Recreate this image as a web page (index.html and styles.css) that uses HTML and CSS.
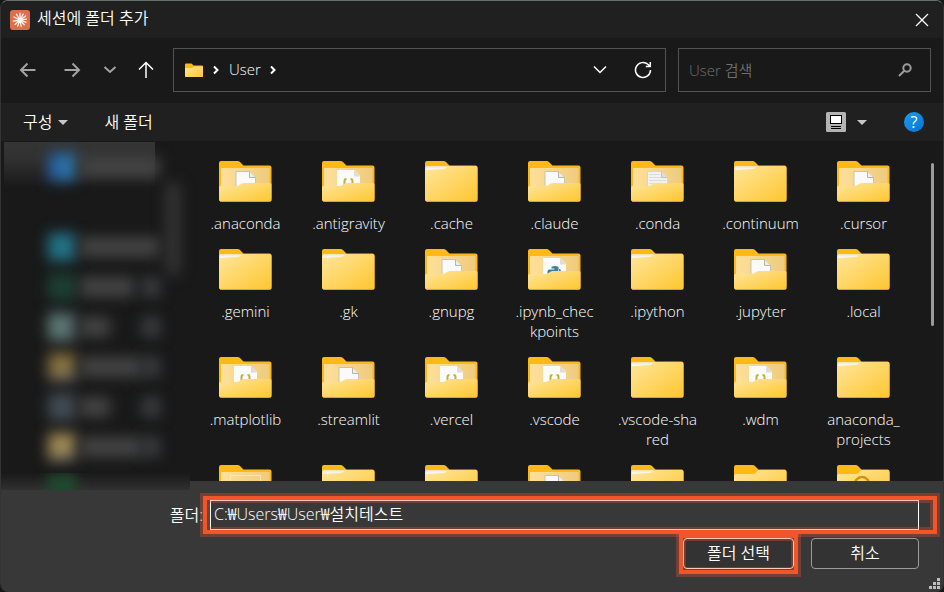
FILE: index.html
```html
<!DOCTYPE html>
<html lang="ko">
<head>
<meta charset="utf-8">
<title>세션에 폴더 추가</title>
<link rel="stylesheet" href="styles.css">
</head>
<body>
<svg class="defs" aria-hidden="true">
  <defs>
    <linearGradient id="front" x1="0" y1="0" x2="1" y2="1">
      <stop offset="0" stop-color="#ffe69c"/><stop offset="1" stop-color="#fec62f"/>
    </linearGradient>
    <linearGradient id="inside" x1="0" y1="0" x2="1" y2="0">
      <stop offset="0" stop-color="#fee09a"/><stop offset="1" stop-color="#eecb7d"/>
    </linearGradient>
    <linearGradient id="sheet" x1="0" y1="0" x2="0" y2="1">
      <stop offset="0" stop-color="#e6e6e6"/><stop offset="1" stop-color="#fffdf4"/>
    </linearGradient>
    <symbol id="folder-back" viewBox="0 0 53 42">
      <path d="M0 3a2 2 0 0 1 2-2h16.500q1.500 0 2.500 1l3.500 3.500h26a2 2 0 0 1 2 2V39a2 2 0 0 1-2 2H2a2 2 0 0 1-2-2z" fill="#fdb915"/>
    </symbol>
    <symbol id="folder" viewBox="0 0 53 42">
      <use href="#folder-back" width="53" height="42"/>
      <path d="M0 8q0-2 2-2h48.500a2 2 0 0 1 2 2V39.500a2 2 0 0 1-2 2H2a2 2 0 0 1-2-2z" fill="url(#front)"/>
      <path d="M1 7.500a1 1 0 0 1 1-1h20.500q-1.500 2.500-4 2.500L1 10z" fill="url(#sheet)"/>
      <path d="M.5 40.500q.5 1 1.500 1h48.500q1.500 0 2-1" fill="none" stroke="#dba52a"/>
    </symbol>
    <symbol id="open-back" viewBox="0 0 53 42">
      <use href="#folder-back" width="53" height="42"/>
      <path d="M2 8h48.500v20H2z" fill="url(#inside)"/>
    </symbol>
    <symbol id="open-front" viewBox="0 0 53 42">
      <path d="M0 27.500q0-1.500 1.500-1.500H17q2 0 3.500-1l1.500-1q1.500-1 3-1h26q1.500 0 1.500 1.500v15a2 2 0 0 1-2 2H2a2 2 0 0 1-2-2z" fill="url(#front)"/>
      <path d="M.5 40.500q.5 1 1.500 1h48.500q1.500 0 2-1" fill="none" stroke="#dba52a"/>
    </symbol>
    <symbol id="folder-doc" viewBox="0 0 53 42">
      <use href="#open-back" width="53" height="42"/>
      <path d="M17 11.500h13.500l6 6V28H17z" fill="#fafafa" stroke="#c9c3b4"/>
      <path d="M30.500 11.500v6h6" fill="#ededed" stroke="#b9b4aa"/>
      <use href="#open-front" width="53" height="42"/>
    </symbol>
    <symbol id="folder-text" viewBox="0 0 53 42">
      <use href="#open-back" width="53" height="42"/>
      <path d="M16.500 11.500h14l6 6V28h-20z" fill="#f1f1ef" stroke="#d8d4c8"/>
      <path d="M18 14.500h11M18 17.500h12M18 20.500h17M18 23.500h17" stroke="#dadddd"/>
      <path d="M30.500 11.500v6h6" fill="#ddd" stroke="#c6c2b8"/>
      <use href="#open-front" width="53" height="42"/>
    </symbol>
    <symbol id="folder-code" viewBox="0 0 53 42">
      <use href="#open-back" width="53" height="42"/>
      <path d="M15 10h17l6 6v12H15z" fill="#fbfbf9"/>
      <path d="M32 10v6.500h6z" fill="#dcdcdc"/>
      <path d="M24.500 19q-2 0-2 2v5M28.500 19q2 0 2 2v5" fill="none" stroke="#b9b53c" stroke-width="2"/>
      <use href="#open-front" width="53" height="42"/>
    </symbol>
    <symbol id="folder-python" viewBox="0 0 53 42">
      <use href="#open-back" width="53" height="42"/>
      <path d="M15 10h17l6 6v12H15z" fill="#fbfbf9"/>
      <path d="M32 10v6.500h6z" fill="#dcdcdc"/>
      <path d="M19.500 26v-2.500q0-2 2-2h5v-1h-3v-1q0-1.500 3.500-1.500t3.500 1.500V22q0 1.500-2 1.500h-3q-2 0-2 2z" fill="#3a7fa3"/>
      <path d="M31 21q2 0 2 3h-2z" fill="#3a7fa3"/>
      <use href="#open-front" width="53" height="42"/>
    </symbol>
    <symbol id="folder-faint" viewBox="0 0 53 42">
      <use href="#open-back" width="53" height="42"/>
      <path d="M11.500 11.500h30V24h-30z" fill="none" stroke="#fbe6b0"/>
      <use href="#open-front" width="53" height="42"/>
    </symbol>
    <symbol id="folder-full" viewBox="0 0 53 42">
      <use href="#folder-back" width="53" height="42"/>
      <path d="M0 12q0-2 2-2h17q1.500 0 2.500-1l1.500-2q1-1 2.500-1h25a2 2 0 0 1 2 2V39.500a2 2 0 0 1-2 2H2a2 2 0 0 1-2-2z" fill="url(#front)"/>
    </symbol>
    <symbol id="folder-ring" viewBox="0 0 53 42">
      <use href="#folder-full" width="53" height="42"/>
      <circle cx="25" cy="20" r="7" fill="none" stroke="#cf9410" stroke-width="2.500"/>
    </symbol>
  </defs>
</svg>

<main class="dialog">
  <header class="titlebar">
    <svg class="app-icon" viewBox="0 0 20 20" aria-hidden="true">
      <rect width="20" height="20" rx="3" fill="#dc6f4c"/>
      <path d="M10 10V3.200M10 10l3.200-6M10 10l5.600-4M10 10l6.500-.8M10 10l6 2.400M10 10l4.200 4.800M10 10l1.200 6.500M10 10l-2.400 6.200M10 10l-5 4.400M10 10l-6.600 1.200M10 10L4 7M10 10L6.400 4.200" stroke="#fff4ee" stroke-width="1.300" stroke-linecap="round"/>
    </svg>
    <h1>세션에 폴더 추가</h1>
    <button class="close" aria-label="닫기"><svg width="14" height="14" viewBox="0 0 14 14"><path d="M1 1l12 12M13 1L1 13" stroke="#fff" stroke-width="1.300"/></svg></button>
  </header>

  <nav class="navbar">
    <div class="history">
      <button class="dim" aria-label="뒤로"><svg width="18" height="18" viewBox="0 0 18 18"><path d="M16.500 9H2M8.500 2.500L2 9l6.500 6.500"/></svg></button>
      <button class="dim" aria-label="앞으로"><svg width="18" height="18" viewBox="0 0 18 18"><path d="M1.500 9H16M9.500 2.500L16 9l-6.500 6.500"/></svg></button>
      <button class="dim recent" aria-label="최근 위치"><svg width="14" height="10" viewBox="0 0 14 10"><path d="M1.500 2L7 7 12.500 2"/></svg></button>
      <button class="up" aria-label="위로"><svg width="18" height="18" viewBox="0 0 18 18"><path d="M9 17V1.500M2 8.500l7-7 7 7"/></svg></button>
    </div>
    <div class="address">
      <svg class="mini-folder" width="18" height="15" viewBox="0 0 18 15" aria-hidden="true"><path d="M0 1.500Q0 .5 1 .5h5.500L8.500 2.500H17q1 0 1 1V13q0 1-1 1H1q-1 0-1-1z" fill="#fdb915"/><path d="M0 5h7l1.500-1.500H18V13q0 1-1 1H1q-1 0-1-1z" fill="url(#front)"/></svg>
      <svg class="crumb-arrow" width="6" height="10" viewBox="0 0 6 10" aria-hidden="true"><path d="M1 1.500L4.500 5 1 8.500"/></svg>
      <a href="#">User</a>
      <svg class="crumb-arrow" width="6" height="10" viewBox="0 0 6 10" aria-hidden="true"><path d="M1 1.500L4.500 5 1 8.500"/></svg>
      <button class="drop" aria-label="이전 위치"><svg width="14" height="10" viewBox="0 0 14 10"><path d="M1 1.500l6 6 6-6"/></svg></button>
      <button class="refresh" aria-label="새로 고침"><svg width="18" height="18" viewBox="0 0 18 18"><path d="M16.500 9a7.500 7.500 0 1 1-2.600-5.700L16 5M16.300 1v4.500h-4.500"/></svg></button>
    </div>
    <div class="search">
      <input type="text" placeholder="User 검색" aria-label="User 검색">
      <svg width="14" height="14" viewBox="0 0 14 14" aria-hidden="true"><circle cx="9" cy="5" r="3.700"/><path d="M6.300 7.700L1 13"/></svg>
    </div>
  </nav>

  <div class="toolbar">
    <button class="organize">구성 <i class="caret"></i></button>
    <button>새 폴더</button>
    <div class="tools">
      <button class="view" aria-label="보기">
        <svg width="20" height="20" viewBox="0 0 20 20"><rect width="20" height="20" rx="1.500" fill="#b4b4b4"/><rect x="4.500" y="3.500" width="11" height="8" fill="#fff" stroke="#000"/><path d="M5 14.500h10M5 16.500h10" stroke="#000"/></svg>
        <i class="caret"></i>
      </button>
      <button class="help" aria-label="도움말">?</button>
    </div>
  </div>

  <div class="content">
    <aside class="places" aria-label="즐겨찾기">
      <div class="place selected"><i class="ico blue"></i><i class="line w80"></i></div>
      <div class="place"></div>
      <div class="place"><i class="ico cyan"></i><i class="line w80"></i></div>
      <div class="place"><i class="ico green"></i><i class="line w50"></i><i class="pin"></i></div>
      <div class="place"><i class="ico mint"></i><i class="line w30"></i><i class="pin"></i></div>
      <div class="place"><i class="ico gold"></i><i class="line w60"></i><i class="pin"></i></div>
      <div class="place"><i class="ico slate"></i><i class="line w30"></i><i class="pin"></i></div>
      <div class="place"><i class="ico amber"></i><i class="line w60"></i><i class="pin"></i></div>
      <i class="thumb"></i>
      <div class="fade"><i class="ico leaf"></i></div>
    </aside>

    <section class="files" aria-label="폴더 목록">
      <ul class="grid">
        <li><svg><use href="#folder-doc"/></svg><span>.anaconda</span></li>
        <li><svg><use href="#folder-code"/></svg><span>.antigravity</span></li>
        <li><svg><use href="#folder"/></svg><span>.cache</span></li>
        <li><svg><use href="#folder-doc"/></svg><span>.claude</span></li>
        <li><svg><use href="#folder-text"/></svg><span>.conda</span></li>
        <li><svg><use href="#folder"/></svg><span>.continuum</span></li>
        <li><svg><use href="#folder-doc"/></svg><span>.cursor</span></li>
        <li><svg><use href="#folder"/></svg><span>.gemini</span></li>
        <li><svg><use href="#folder"/></svg><span>.gk</span></li>
        <li><svg><use href="#folder-doc"/></svg><span>.gnupg</span></li>
        <li><svg><use href="#folder-python"/></svg><span>.ipynb_chec<br>kpoints</span></li>
        <li><svg><use href="#folder"/></svg><span>.ipython</span></li>
        <li><svg><use href="#folder-doc"/></svg><span>.jupyter</span></li>
        <li><svg><use href="#folder"/></svg><span>.local</span></li>
        <li><svg><use href="#folder-code"/></svg><span>.matplotlib</span></li>
        <li><svg><use href="#folder-doc"/></svg><span>.streamlit</span></li>
        <li><svg><use href="#folder-code"/></svg><span>.vercel</span></li>
        <li><svg><use href="#folder-code"/></svg><span>.vscode</span></li>
        <li><svg><use href="#folder"/></svg><span>.vscode-sha<br>red</span></li>
        <li><svg><use href="#folder-code"/></svg><span>.wdm</span></li>
        <li><svg><use href="#folder"/></svg><span>anaconda_<br>projects</span></li>
        <li><svg><use href="#folder-faint"/></svg></li>
        <li><svg><use href="#folder"/></svg></li>
        <li><svg><use href="#folder"/></svg></li>
        <li><svg><use href="#folder-doc"/></svg></li>
        <li><svg><use href="#folder"/></svg></li>
        <li><svg><use href="#folder-full"/></svg></li>
        <li><svg><use href="#folder-ring"/></svg></li>
      </ul>
      <i class="scroll"></i>
    </section>
  </div>

  <footer class="footer">
    <div class="field">
      <label for="path">폴더:</label>
      <input id="path" type="text" value="C:₩Users₩User₩설치테스트">
      <i class="mark"></i>
    </div>
    <div class="actions">
      <div class="primary"><button>폴더 선택</button><i class="mark"></i></div>
      <button>취소</button>
    </div>
    <svg class="grip" width="11" height="11" viewBox="0 0 11 11" aria-hidden="true"><path d="M8 0h3v3H8zM4 4h3v3H4zM8 4h3v3H8zM0 8h3v3H0zM4 8h3v3H4zM8 8h3v3H8z" fill="#bdbdbd"/></svg>
  </footer>
</main>
</body>
</html>
```
FILE: styles.css
```css
* {
  box-sizing: border-box;
}

body {
  margin: 0;
  background: #161616;
  color: #fff;
  font-family: "Open Sans", "Noto Sans CJK KR", sans-serif;
  font-size: 15px;
  font-weight: 360;
  line-height: 20px;
}

button,
input {
  margin: 0;
  padding: 0;
  border: 0;
  background: none;
  color: inherit;
  font: inherit;
}

.defs {
  position: absolute;
  width: 0;
  height: 0;
}

.dialog {
  display: flex;
  flex-direction: column;
  height: 100vh;
  overflow: hidden;
  border-top: 1px solid #69716f;
  border-left: 1px solid #343434;
  border-right: 1px solid #343434;
  border-radius: 8px;
  background: #191919;
}

/* Title bar */
.titlebar {
  display: flex;
  align-items: center;
  height: 37px;
  flex: none;
  padding: 0 14px 0 9px;
  background: #202020;
}

.app-icon {
  width: 20px;
  height: 20px;
}

h1 {
  flex: 1;
  margin: 0 0 0 7px;
  padding-bottom: 3px;
  font-size: 16px;
  font-weight: inherit;
}

.close {
  display: flex;
}

/* Navigation */
.navbar {
  display: flex;
  flex: none;
  padding: 10px 12px 11px 5px;
}

.history {
  display: flex;
  margin-right: 7px;
}

.history button {
  display: flex;
  align-items: center;
  justify-content: center;
  width: 44px;
}

.history .recent {
  width: 32px;
}

.history .up {
  width: 40px;
}

.navbar svg {
  flex: none;
}

.history svg,
.address button svg,
.crumb-arrow,
.search svg {
  fill: none;
  stroke: #fff;
  stroke-width: 1.5;
}

.history .dim svg {
  stroke: #a3a3a3;
  stroke-width: 2;
}

.address,
.search {
  display: flex;
  align-items: center;
  height: 44px;
  border: 1px solid #535353;
}

.address {
  flex: 1;
  padding: 0 13px 0 11px;
}

.address a {
  margin: 0 9px 0 10px;
  padding-bottom: 2px;
  color: #fff;
  text-decoration: none;
}

.address .crumb-arrow {
  stroke-width: 2;
}

.mini-folder {
  margin-right: 10px;
}

.address button {
  display: flex;
}

.drop {
  margin-left: auto;
}

.refresh {
  margin-left: 27px;
}

.search {
  width: 253px;
  margin-left: 12px;
  padding: 0 18px 0 10px;
}

.search input {
  flex: 1;
  min-width: 0;
  outline: 0;
}

.search input::placeholder {
  color: #707070;
  opacity: 1;
}

.search svg {
  stroke: #9d9d9d;
  stroke-width: 2;
}

/* Toolbar */
.toolbar {
  display: flex;
  align-items: center;
  flex: none;
  height: 38px;
  padding: 0 19px 0 22px;
  background: #202020;
  font-size: 16px;
}

.caret {
  display: inline-block;
  border: 5px solid transparent;
  border-top-color: #c8c8c8;
  border-bottom: 0;
}

.organize {
  display: flex;
  align-items: center;
  gap: 6px;
  margin-right: 36px;
}

.tools {
  display: flex;
  align-items: center;
  margin-left: auto;
}

.view {
  display: flex;
  align-items: center;
  gap: 11px;
}

.help {
  width: 20px;
  height: 20px;
  margin-left: 37px;
  border-radius: 50%;
  background: linear-gradient(135deg, #1b9df0, #0873d2);
  font-weight: 400;
  line-height: 20px;
}

/* Content */
.content {
  position: relative;
  z-index: 1;
  display: flex;
  flex: 1;
  min-height: 0;
}

.places {
  position: relative;
  width: 189px;
  flex: none;
  padding: 6px 0 0 3px;
}

.place {
  display: flex;
  align-items: center;
  height: 40px;
  padding: 0 30px 0 44px;
}

.selected {
  height: 45px;
  margin-top: -5px;
  padding-top: 5px;
  background: linear-gradient(#353535, #303030 40%, #191919) 0 0 / 151px 100% no-repeat;
}

.ico,
.line,
.pin,
.thumb {
  filter: blur(7px);
}

.ico {
  width: 28px;
  height: 28px;
}

.line {
  height: 20px;
  margin-left: 4px;
  background: #444;
}

.pin {
  width: 18px;
  height: 20px;
  margin-left: auto;
  background: #3b3e42;
}

.w30 { width: 30px; }
.w50 { width: 54px; }
.w60 { width: 62px; }
.w80 { width: 80px; }

.blue { background: linear-gradient(90deg, #2459a0, #2e7fae); }
.cyan { background: #237286; }
.green { background: #1d3f33; }
.mint { background: linear-gradient(100deg, #5d8277, #596670); }
.gold { background: linear-gradient(165deg, #86703f 55%, #6d7078); }
.slate { background: #414b54; }
.amber { background: linear-gradient(165deg, #a08a55 60%, #555d6b); }
.leaf { background: #1f4a30; }

.thumb {
  position: absolute;
  top: 42px;
  right: 10px;
  width: 14px;
  height: 92px;
  background: #363636;
}

.fade {
  position: absolute;
  top: 332px;
  left: 0;
  width: 100%;
  height: 17px;
  padding-left: 47px;
  overflow: hidden;
  background: linear-gradient(#191919, #303030);
}

.fade .ico {
  display: block;
}

.files {
  position: relative;
  flex: 1;
  min-width: 0;
  overflow: hidden;
}

.grid {
  display: grid;
  grid-template-columns: repeat(auto-fill, 103px);
  row-gap: 15px;
  margin: 0;
  padding: 19px 24px 0 4px;
  list-style: none;
}

.grid li {
  display: flex;
  flex-direction: column;
  align-items: center;
  gap: 11px;
  text-align: center;
}

.grid svg {
  width: 53px;
  height: 42px;
}

.scroll {
  position: absolute;
  top: 22px;
  right: 9px;
  width: 3px;
  height: 163px;
  border-radius: 2px;
  background: #9a9a9a;
}

/* Footer */
.footer {
  position: relative;
  flex: none;
  padding: 19px 24px 23px 0;
  background: #383838;
}

.field {
  position: relative;
  display: flex;
  align-items: center;
}

.field label {
  width: 209px;
  flex: none;
  padding-right: 7px;
  text-align: right;
}

.field label,
.field input {
  font-size: 16px;
}

.field input {
  flex: 1;
  min-width: 0;
  height: 30px;
  padding: 0 3px 4px;
  border: 1px solid #fff;
  outline: 0;
}

.actions {
  display: flex;
  justify-content: flex-end;
  gap: 17px;
  margin-top: 8px;
  font-size: 16px;
}

.actions button {
  width: 108px;
  height: 31px;
  padding-bottom: 2px;
  border: 1px solid #9b9b9b;
  border-radius: 4px;
  background: #333;
}

.primary {
  position: relative;
}

.actions .primary button {
  width: 111px;
  border-color: #fff;
}

.mark {
  position: absolute;
  border: 4px solid #f1562b;
  box-shadow: 0 0 0 3px #f1562b50, inset 0 0 0 3px #f1562b50;
  pointer-events: none;
}

.field .mark {
  inset: -4px -18px -4px 202px;
}

.primary .mark {
  inset: -4px -4px -5px;
}

.grip {
  position: absolute;
  right: 3px;
  bottom: 3px;
}
```
